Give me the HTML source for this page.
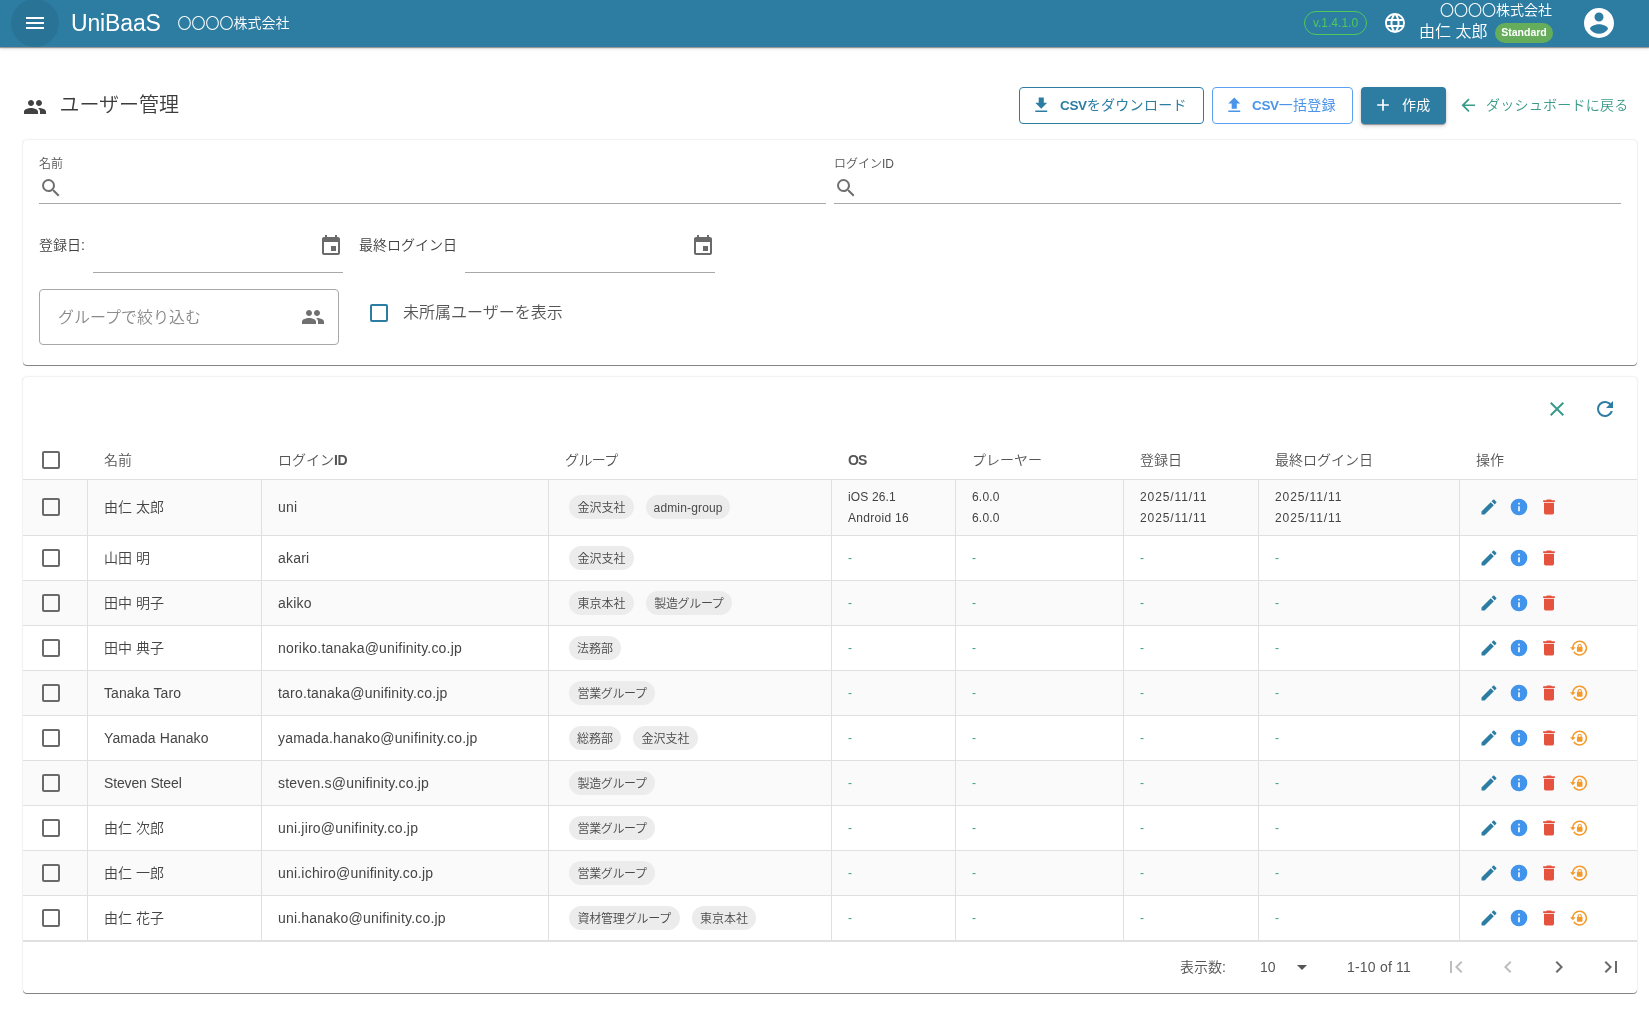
<!DOCTYPE html><html lang="ja"><head><meta charset="utf-8"><title>UniBaaS</title><style>
*{box-sizing:border-box;margin:0;padding:0}
html,body{width:1649px;height:1010px;overflow:hidden;background:#fff}
#app{position:absolute;left:0;top:0;width:1649px;height:1010px;will-change:transform;transform:translateZ(0)}
body{font-family:"Liberation Sans","Noto Sans CJK JP",sans-serif;color:#424242;position:relative;font-weight:350}
.abs{position:absolute;white-space:nowrap}
.ic{position:absolute;display:block}
#bar{position:absolute;left:0;top:0;width:1649px;height:47px;background:#2d7da3;box-shadow:0 1px 1px 0 rgba(0,0,0,.35),0 2px 3px 0 rgba(0,0,0,.12)}
.card{position:absolute;background:#fff;border-radius:4px;box-shadow:0 1px .5px 0 rgba(0,0,0,.45),0 0 2px 0 rgba(0,0,0,.2)}
.btn{position:absolute;height:37px;border-radius:4px;font-size:13px;white-space:nowrap}
.btn b{font-weight:700;font-size:13.5px;letter-spacing:-.35px}
.btn .jp{font-size:14px;font-weight:400;letter-spacing:.3px}
.line{position:absolute;height:1px;background:#a8a8a8}
.vl{position:absolute;width:1px;background:#e0e0e0}
.hl{position:absolute;height:1px;background:#e0e0e0;left:23px;width:1614px}
.row{position:absolute;left:23px;width:1614px}
.chip{position:absolute;height:24px;border-radius:12px;background:#ececec;font-size:12px;line-height:24px;padding:0;text-align:center;color:#4a4a4a;white-space:nowrap}
.chip i{font-style:normal;display:inline-block;transform:translateY(.5px)}
.t14{font-size:14px;color:#454545;letter-spacing:.2px}
.dash{font-size:12px;color:#3f9a90}
.sm{font-size:12px;color:#424242;letter-spacing:.3px}
.hd{font-size:14px;color:#555;}
</style></head><body><div id="app">
<div id="bar">
<div class="abs" style="left:11px;top:-1px;width:48px;height:48px;border-radius:50%;background:rgba(0,0,0,.075)"></div>
<svg class="ic" style="left:23px;top:11px;width:24px;height:24px;" viewBox="0 0 24 24"><path fill="#fff" d="M3,6H21V8H3V6M3,11H21V13H3V11M3,16H21V18H3V16Z"/></svg>
<div class="abs" id="brand" style="left:71px;top:9px;font-size:23px;line-height:28px;color:#fff;letter-spacing:-.15px">UniBaaS</div>
<div class="abs" id="co1" style="left:177.5px;top:12.5px;font-size:14px;line-height:20px;color:#fff">〇〇〇〇株式会社</div>
<div class="abs" id="ver" style="left:1304px;top:11px;width:63px;height:24px;border:1px solid #4dc95a;border-radius:12px;color:#4dc95a;font-size:12px;line-height:22px;text-align:center">v.1.4.1.0</div>
<svg class="ic" style="left:1383px;top:11px;width:24px;height:24px;" viewBox="0 0 24 24"><path fill="#fff" d="M16.36,14C16.44,13.34 16.5,12.68 16.5,12C16.5,11.32 16.44,10.66 16.36,10H19.74C19.9,10.64 20,11.31 20,12C20,12.69 19.9,13.36 19.74,14M14.59,19.56C15.19,18.45 15.65,17.25 15.97,16H18.92C17.96,17.65 16.43,18.93 14.59,19.56M14.34,14H9.66C9.56,13.34 9.5,12.68 9.5,12C9.5,11.32 9.56,10.65 9.66,10H14.34C14.43,10.65 14.5,11.32 14.5,12C14.5,12.68 14.43,13.34 14.34,14M12,19.96C11.17,18.76 10.5,17.43 10.09,16H13.91C13.5,17.43 12.83,18.76 12,19.96M8,8H5.08C6.03,6.34 7.57,5.06 9.4,4.44C8.8,5.55 8.35,6.75 8,8M5.08,16H8C8.35,17.25 8.8,18.45 9.4,19.56C7.57,18.93 6.03,17.65 5.08,16M4.26,14C4.1,13.36 4,12.69 4,12C4,11.31 4.1,10.64 4.26,10H7.64C7.56,10.66 7.5,11.32 7.5,12C7.5,12.68 7.56,13.34 7.64,14M12,4.03C12.83,5.23 13.5,6.57 13.91,8H10.09C10.5,6.57 11.17,5.23 12,4.03M18.92,8H15.97C15.65,6.75 15.19,5.55 14.59,4.44C16.43,5.07 17.96,6.34 18.92,8M12,2C6.47,2 2,6.5 2,12A10,10 0 0,0 12,22A10,10 0 0,0 22,12A10,10 0 0,0 12,2Z"/></svg>
<div class="abs" id="co2" style="right:97px;top:0px;font-size:14px;line-height:21px;color:#fff">〇〇〇〇株式会社</div>
<div class="abs" id="uname" style="left:1419px;top:21px;font-size:16px;line-height:22px;color:#fff">由仁 太郎</div>
<div class="abs" id="std" style="left:1495px;top:23px;width:58px;height:20px;border-radius:10px;background:#66ad5b;color:#fff;font-size:10.5px;font-weight:700;line-height:19px;text-align:center">Standard</div>
<svg class="ic" style="left:1581px;top:5px;width:36px;height:36px;" viewBox="0 0 24 24"><path fill="#fff" d="M12,19.2C9.5,19.2 7.29,17.92 6,16C6.03,14 10,12.9 12,12.9C14,12.9 17.97,14 18,16C16.71,17.92 14.5,19.2 12,19.2M12,5A3,3 0 0,1 15,8A3,3 0 0,1 12,11A3,3 0 0,1 9,8A3,3 0 0,1 12,5M12,2A10,10 0 0,0 2,12A10,10 0 0,0 12,22A10,10 0 0,0 22,12C22,6.47 17.5,2 12,2Z"/></svg>
</div>
<svg class="ic" style="left:23px;top:95px;width:24px;height:24px;" viewBox="0 0 24 24"><path fill="#424242" d="M16 11c1.66 0 2.99-1.34 2.99-3S17.66 5 16 5c-1.66 0-3 1.34-3 3s1.34 3 3 3zm-8 0c1.66 0 2.99-1.34 2.99-3S9.66 5 8 5C6.34 5 5 6.34 5 8s1.34 3 3 3zm0 2c-2.33 0-7 1.17-7 3.5V19h14v-2.5c0-2.33-4.67-3.5-7-3.5zm8 0c-.29 0-.62.02-.97.05 1.16.84 1.97 1.97 1.97 3.45V19h6v-2.5c0-2.33-4.67-3.5-7-3.5z"/></svg>
<div class="abs" id="title" style="left:59.5px;top:90px;font-size:20px;line-height:30px;color:#3c3c3c;font-weight:350">ユーザー管理</div>
<div class="btn" style="left:1019px;top:87px;width:185px;border:1px solid #2d7da3;color:#2d7da3"><svg class="ic" style="left:10.75px;top:6.75px;width:20.5px;height:20.5px;" viewBox="0 0 24 24"><path fill="#2d7da3" d="M5,20H19V18H5M19,9H15V3H9V9H5L12,16L19,9Z"/></svg><span class="abs" id="b1" style="left:40px;top:0;line-height:35px"><b>CSV</b><span class="jp">をダウンロード</span></span></div>
<div class="btn" style="left:1212px;top:87px;width:141px;border:1px solid #5aa1f2;color:#4a94ea"><svg class="ic" style="left:10.75px;top:6.75px;width:20.5px;height:20.5px;" viewBox="0 0 24 24"><path fill="#4a94ea" d="M9,16V10H5L12,3L19,10H15V16H9M5,20V18H19V20H5Z"/></svg><span class="abs" id="b2" style="left:39px;top:0;line-height:35px"><b>CSV</b><span class="jp">一括登録</span></span></div>
<div class="btn" style="left:1361px;top:87px;width:85px;background:#2d7da3;color:#fff;box-shadow:0 1px 1px 0 rgba(0,0,0,.35),0 2px 4px 0 rgba(0,0,0,.18)"><svg class="ic" style="left:12px;top:8px;width:20px;height:20px;" viewBox="0 0 24 24"><path fill="#fff" d="M19,13H13V19H11V13H5V11H11V5H13V11H19V13Z"/></svg><span class="abs jp" id="b3" style="left:41px;top:0;line-height:37px">作成</span></div>
<svg class="ic" style="left:1458.05px;top:94.75px;width:20.5px;height:20.5px;" viewBox="0 0 24 24"><path fill="#3a9a8a" d="M20,11V13H8L13.5,18.5L12.08,19.92L4.16,12L12.08,4.08L13.5,5.5L8,11H20Z"/></svg>
<div class="abs" id="back" style="left:1486px;top:94px;font-size:14px;line-height:22px;color:#3a9a8a;letter-spacing:.25px">ダッシュボードに戻る</div>
<div class="card" style="left:23px;top:140px;width:1614px;height:225px"></div>
<div class="abs" style="left:39px;top:156px;font-size:12px;line-height:16px;color:#555">名前</div>
<svg class="ic" style="left:39px;top:176px;width:24px;height:24px;" viewBox="0 0 24 24"><path fill="#707070" d="M9.5,3A6.5,6.5 0 0,1 16,9.5C16,11.11 15.41,12.59 14.44,13.73L14.71,14H15.5L20.5,19L19,20.5L14,15.5V14.71L13.73,14.44C12.59,15.41 11.11,16 9.5,16A6.5,6.5 0 0,1 3,9.5A6.5,6.5 0 0,1 9.5,3M9.5,5C7,5 5,7 5,9.5C5,12 7,14 9.5,14C12,14 14,12 14,9.5C14,7 12,5 9.5,5Z"/></svg>
<div class="line" style="left:39px;top:203px;width:787px"></div>
<div class="abs" style="left:834px;top:156px;font-size:12px;line-height:16px;color:#555">ログインID</div>
<svg class="ic" style="left:834px;top:176px;width:24px;height:24px;" viewBox="0 0 24 24"><path fill="#707070" d="M9.5,3A6.5,6.5 0 0,1 16,9.5C16,11.11 15.41,12.59 14.44,13.73L14.71,14H15.5L20.5,19L19,20.5L14,15.5V14.71L13.73,14.44C12.59,15.41 11.11,16 9.5,16A6.5,6.5 0 0,1 3,9.5A6.5,6.5 0 0,1 9.5,3M9.5,5C7,5 5,7 5,9.5C5,12 7,14 9.5,14C12,14 14,12 14,9.5C14,7 12,5 9.5,5Z"/></svg>
<div class="line" style="left:834px;top:203px;width:787px"></div>
<div class="abs" style="left:39px;top:235px;font-size:14px;line-height:20px;color:#424242">登録日:</div>
<div class="line" style="left:93px;top:272px;width:250px"></div>
<svg class="ic" style="left:319px;top:234px;width:24px;height:24px;" viewBox="0 0 24 24"><path fill="#6a6a6a" d="M17 12h-5v5h5v-5zM16 1v2H8V1H6v2H5c-1.11 0-1.99.9-1.99 2L3 19c0 1.1.89 2 2 2h14c1.1 0 2-.9 2-2V5c0-1.1-.9-2-2-2h-1V1h-2zm3 18H5V8h14v11z"/></svg>
<div class="abs" style="left:359px;top:235px;font-size:14px;line-height:20px;color:#424242">最終ログイン日</div>
<div class="line" style="left:465px;top:272px;width:250px"></div>
<svg class="ic" style="left:691px;top:234px;width:24px;height:24px;" viewBox="0 0 24 24"><path fill="#6a6a6a" d="M17 12h-5v5h5v-5zM16 1v2H8V1H6v2H5c-1.11 0-1.99.9-1.99 2L3 19c0 1.1.89 2 2 2h14c1.1 0 2-.9 2-2V5c0-1.1-.9-2-2-2h-1V1h-2zm3 18H5V8h14v11z"/></svg>
<div class="abs" style="left:39px;top:289px;width:300px;height:56px;border:1px solid #a8a8a8;border-radius:4px"></div>
<div class="abs" style="left:58px;top:306px;font-size:16px;line-height:24px;color:#8a8a8a">グループで絞り込む</div>
<svg class="ic" style="left:301px;top:305px;width:24px;height:24px;" viewBox="0 0 24 24"><path fill="#707070" d="M16 11c1.66 0 2.99-1.34 2.99-3S17.66 5 16 5c-1.66 0-3 1.34-3 3s1.34 3 3 3zm-8 0c1.66 0 2.99-1.34 2.99-3S9.66 5 8 5C6.34 5 5 6.34 5 8s1.34 3 3 3zm0 2c-2.33 0-7 1.17-7 3.5V19h14v-2.5c0-2.33-4.67-3.5-7-3.5zm8 0c-.29 0-.62.02-.97.05 1.16.84 1.97 1.97 1.97 3.45V19h6v-2.5c0-2.33-4.67-3.5-7-3.5z"/></svg>
<div class="abs" style="left:370px;top:304px;width:18px;height:18px;border:2px solid #2d7da3;border-radius:2px"></div>
<div class="abs" style="left:403px;top:301px;font-size:16px;line-height:24px;color:#555">未所属ユーザーを表示</div>
<div class="card" style="left:23px;top:377px;width:1614px;height:616px"></div>
<svg class="ic" style="left:1545px;top:397px;width:24px;height:24px;" viewBox="0 0 24 24"><path fill="#3a9a8a" d="M19,6.41L17.59,5L12,10.59L6.41,5L5,6.41L10.59,12L5,17.59L6.41,19L12,13.41L17.59,19L19,17.59L13.41,12L19,6.41Z"/></svg>
<svg class="ic" style="left:1593px;top:397px;width:24px;height:24px;" viewBox="0 0 24 24"><path fill="#2d7da3" d="M17.65,6.35C16.2,4.9 14.21,4 12,4A8,8 0 0,0 4,12A8,8 0 0,0 12,20C15.73,20 18.84,17.45 19.73,14H17.65C16.83,16.33 14.61,18 12,18A6,6 0 0,1 6,12A6,6 0 0,1 12,6C13.66,6 15.14,6.69 16.22,7.78L13,11H20V4L17.65,6.35Z"/></svg>
<svg class="ic" style="left:39px;top:448px;width:24px;height:24px;" viewBox="0 0 24 24"><path fill="#6a6a6a" d="M19,3H5C3.89,3 3,3.89 3,5V19A2,2 0 0,0 5,21H19A2,2 0 0,0 21,19V5C21,3.89 20.1,3 19,3M19,5V19H5V5H19Z"/></svg>
<div class="abs hd" style="left:104px;top:449.5px;line-height:20px;">名前</div>
<div class="abs hd" style="left:278px;top:449.5px;line-height:20px;">ログイン<b style="letter-spacing:-.5px">ID</b></div>
<div class="abs hd" style="left:565px;top:449.5px;line-height:20px;letter-spacing:-.6px;">グループ</div>
<div class="abs hd" style="left:848px;top:449.5px;line-height:20px;font-weight:700;letter-spacing:-.9px;">OS</div>
<div class="abs hd" style="left:972px;top:449.5px;line-height:20px;">プレーヤー</div>
<div class="abs hd" style="left:1140px;top:449.5px;line-height:20px;">登録日</div>
<div class="abs hd" style="left:1275px;top:449.5px;line-height:20px;">最終ログイン日</div>
<div class="abs hd" style="left:1476px;top:449.5px;line-height:20px;">操作</div>
<div class="row" style="top:480px;height:55px;background:#fafafa"></div>
<div class="hl" style="top:479px"></div>
<svg class="ic" style="left:39px;top:494.5px;width:24px;height:24px;" viewBox="0 0 24 24"><path fill="#6a6a6a" d="M19,3H5C3.89,3 3,3.89 3,5V19A2,2 0 0,0 5,21H19A2,2 0 0,0 21,19V5C21,3.89 20.1,3 19,3M19,5V19H5V5H19Z"/></svg>
<div class="abs t14" style="left:104px;top:496.5px;line-height:20px;letter-spacing:0">由仁 太郎</div>
<div class="abs t14" style="left:278px;top:496.5px;line-height:20px">uni</div>
<div class="abs" style="left:569px;top:494.5px;display:flex;gap:12px"><span class="chip" style="position:static;width:64.8px;letter-spacing:0px"><i>金沢支社</i></span><span class="chip" style="position:static;width:84.6px;letter-spacing:0.15px"><i>admin-group</i></span></div>
<div class="abs sm" style="left:848px;top:487px;line-height:20px;letter-spacing:0.15px">iOS 26.1</div>
<div class="abs sm" style="left:848px;top:508px;line-height:20px;letter-spacing:0.3px">Android 16</div>
<div class="abs sm" style="left:972px;top:487px;line-height:20px;letter-spacing:0.2px">6.0.0</div>
<div class="abs sm" style="left:972px;top:508px;line-height:20px;letter-spacing:0.2px">6.0.0</div>
<div class="abs sm" style="left:1140px;top:487px;line-height:20px;letter-spacing:0.9px">2025/11/11</div>
<div class="abs sm" style="left:1140px;top:508px;line-height:20px;letter-spacing:0.9px">2025/11/11</div>
<div class="abs sm" style="left:1275px;top:487px;line-height:20px;letter-spacing:0.9px">2025/11/11</div>
<div class="abs sm" style="left:1275px;top:508px;line-height:20px;letter-spacing:0.9px">2025/11/11</div>
<svg class="ic" style="left:1479px;top:496.5px;width:20px;height:20px;" viewBox="0 0 24 24"><path fill="#2d7da3" d="M20.71,7.04C21.1,6.65 21.1,6 20.71,5.63L18.37,3.29C18,2.9 17.35,2.9 16.96,3.29L15.12,5.12L18.87,8.87M3,17.25V21H6.75L17.81,9.93L14.06,6.18L3,17.25Z"/></svg>
<svg class="ic" style="left:1509px;top:496.5px;width:20px;height:20px;" viewBox="0 0 24 24"><path fill="#4094ec" d="M13,9H11V7H13M13,17H11V11H13M12,2A10,10 0 0,0 2,12A10,10 0 0,0 12,22A10,10 0 0,0 22,12A10,10 0 0,0 12,2Z"/></svg>
<svg class="ic" style="left:1539px;top:496.5px;width:20px;height:20px;" viewBox="0 0 24 24"><path fill="#e5533e" d="M19,4H15.5L14.5,3H9.5L8.5,4H5V6H19M6,19A2,2 0 0,0 8,21H16A2,2 0 0,0 18,19V7H6V19Z"/></svg>
<div class="row" style="top:536px;height:44px;background:#fff"></div>
<div class="hl" style="top:535px"></div>
<svg class="ic" style="left:39px;top:546px;width:24px;height:24px;" viewBox="0 0 24 24"><path fill="#6a6a6a" d="M19,3H5C3.89,3 3,3.89 3,5V19A2,2 0 0,0 5,21H19A2,2 0 0,0 21,19V5C21,3.89 20.1,3 19,3M19,5V19H5V5H19Z"/></svg>
<div class="abs t14" style="left:104px;top:548.0px;line-height:20px;letter-spacing:0">山田 明</div>
<div class="abs t14" style="left:278px;top:548.0px;line-height:20px">akari</div>
<div class="abs" style="left:569px;top:546.0px;display:flex;gap:12px"><span class="chip" style="position:static;width:64.8px;letter-spacing:0px"><i>金沢支社</i></span></div>
<div class="abs dash" style="left:848px;top:548.0px;line-height:20px">-</div>
<div class="abs dash" style="left:972px;top:548.0px;line-height:20px">-</div>
<div class="abs dash" style="left:1140px;top:548.0px;line-height:20px">-</div>
<div class="abs dash" style="left:1275px;top:548.0px;line-height:20px">-</div>
<svg class="ic" style="left:1479px;top:548px;width:20px;height:20px;" viewBox="0 0 24 24"><path fill="#2d7da3" d="M20.71,7.04C21.1,6.65 21.1,6 20.71,5.63L18.37,3.29C18,2.9 17.35,2.9 16.96,3.29L15.12,5.12L18.87,8.87M3,17.25V21H6.75L17.81,9.93L14.06,6.18L3,17.25Z"/></svg>
<svg class="ic" style="left:1509px;top:548px;width:20px;height:20px;" viewBox="0 0 24 24"><path fill="#4094ec" d="M13,9H11V7H13M13,17H11V11H13M12,2A10,10 0 0,0 2,12A10,10 0 0,0 12,22A10,10 0 0,0 22,12A10,10 0 0,0 12,2Z"/></svg>
<svg class="ic" style="left:1539px;top:548px;width:20px;height:20px;" viewBox="0 0 24 24"><path fill="#e5533e" d="M19,4H15.5L14.5,3H9.5L8.5,4H5V6H19M6,19A2,2 0 0,0 8,21H16A2,2 0 0,0 18,19V7H6V19Z"/></svg>
<div class="row" style="top:581px;height:44px;background:#fafafa"></div>
<div class="hl" style="top:580px"></div>
<svg class="ic" style="left:39px;top:591px;width:24px;height:24px;" viewBox="0 0 24 24"><path fill="#6a6a6a" d="M19,3H5C3.89,3 3,3.89 3,5V19A2,2 0 0,0 5,21H19A2,2 0 0,0 21,19V5C21,3.89 20.1,3 19,3M19,5V19H5V5H19Z"/></svg>
<div class="abs t14" style="left:104px;top:593.0px;line-height:20px;letter-spacing:0">田中 明子</div>
<div class="abs t14" style="left:278px;top:593.0px;line-height:20px">akiko</div>
<div class="abs" style="left:569px;top:591.0px;display:flex;gap:12px"><span class="chip" style="position:static;width:64.8px;letter-spacing:0px"><i>東京本社</i></span><span class="chip" style="position:static;width:86.2px;letter-spacing:-0.37px"><i>製造グループ</i></span></div>
<div class="abs dash" style="left:848px;top:593.0px;line-height:20px">-</div>
<div class="abs dash" style="left:972px;top:593.0px;line-height:20px">-</div>
<div class="abs dash" style="left:1140px;top:593.0px;line-height:20px">-</div>
<div class="abs dash" style="left:1275px;top:593.0px;line-height:20px">-</div>
<svg class="ic" style="left:1479px;top:593px;width:20px;height:20px;" viewBox="0 0 24 24"><path fill="#2d7da3" d="M20.71,7.04C21.1,6.65 21.1,6 20.71,5.63L18.37,3.29C18,2.9 17.35,2.9 16.96,3.29L15.12,5.12L18.87,8.87M3,17.25V21H6.75L17.81,9.93L14.06,6.18L3,17.25Z"/></svg>
<svg class="ic" style="left:1509px;top:593px;width:20px;height:20px;" viewBox="0 0 24 24"><path fill="#4094ec" d="M13,9H11V7H13M13,17H11V11H13M12,2A10,10 0 0,0 2,12A10,10 0 0,0 12,22A10,10 0 0,0 22,12A10,10 0 0,0 12,2Z"/></svg>
<svg class="ic" style="left:1539px;top:593px;width:20px;height:20px;" viewBox="0 0 24 24"><path fill="#e5533e" d="M19,4H15.5L14.5,3H9.5L8.5,4H5V6H19M6,19A2,2 0 0,0 8,21H16A2,2 0 0,0 18,19V7H6V19Z"/></svg>
<div class="row" style="top:626px;height:44px;background:#fff"></div>
<div class="hl" style="top:625px"></div>
<svg class="ic" style="left:39px;top:636px;width:24px;height:24px;" viewBox="0 0 24 24"><path fill="#6a6a6a" d="M19,3H5C3.89,3 3,3.89 3,5V19A2,2 0 0,0 5,21H19A2,2 0 0,0 21,19V5C21,3.89 20.1,3 19,3M19,5V19H5V5H19Z"/></svg>
<div class="abs t14" style="left:104px;top:638.0px;line-height:20px;letter-spacing:0">田中 典子</div>
<div class="abs t14" style="left:278px;top:638.0px;line-height:20px">noriko.tanaka@unifinity.co.jp</div>
<div class="abs" style="left:569px;top:636.0px;display:flex;gap:12px"><span class="chip" style="position:static;width:52px;letter-spacing:0px"><i>法務部</i></span></div>
<div class="abs dash" style="left:848px;top:638.0px;line-height:20px">-</div>
<div class="abs dash" style="left:972px;top:638.0px;line-height:20px">-</div>
<div class="abs dash" style="left:1140px;top:638.0px;line-height:20px">-</div>
<div class="abs dash" style="left:1275px;top:638.0px;line-height:20px">-</div>
<svg class="ic" style="left:1479px;top:638px;width:20px;height:20px;" viewBox="0 0 24 24"><path fill="#2d7da3" d="M20.71,7.04C21.1,6.65 21.1,6 20.71,5.63L18.37,3.29C18,2.9 17.35,2.9 16.96,3.29L15.12,5.12L18.87,8.87M3,17.25V21H6.75L17.81,9.93L14.06,6.18L3,17.25Z"/></svg>
<svg class="ic" style="left:1509px;top:638px;width:20px;height:20px;" viewBox="0 0 24 24"><path fill="#4094ec" d="M13,9H11V7H13M13,17H11V11H13M12,2A10,10 0 0,0 2,12A10,10 0 0,0 12,22A10,10 0 0,0 22,12A10,10 0 0,0 12,2Z"/></svg>
<svg class="ic" style="left:1539px;top:638px;width:20px;height:20px;" viewBox="0 0 24 24"><path fill="#e5533e" d="M19,4H15.5L14.5,3H9.5L8.5,4H5V6H19M6,19A2,2 0 0,0 8,21H16A2,2 0 0,0 18,19V7H6V19Z"/></svg>
<svg class="ic" style="left:1569.9px;top:638.9px;width:18.2px;height:18.2px;" viewBox="0 0 24 24"><path fill="#f39a2b" d="M12.63,2C18.16,2 22.64,6.5 22.64,12C22.64,17.5 18.16,22 12.63,22C9.12,22 6.05,20.18 4.26,17.43L5.84,16.18C7.25,18.47 9.76,20 12.64,20A8,8 0 0,0 20.64,12A8,8 0 0,0 12.64,4C8.56,4 5.2,7.06 4.71,11H7.47L3.73,14.73L0,11H2.69C3.19,5.95 7.45,2 12.63,2M15.59,10.24C16.09,10.25 16.5,10.65 16.5,11.16V15.77C16.5,16.27 16.09,16.69 15.58,16.69H10.05C9.54,16.69 9.13,16.27 9.13,15.77V11.16C9.13,10.65 9.54,10.25 10.04,10.24V9.23C10.04,7.7 11.29,6.46 12.81,6.46C14.34,6.46 15.59,7.7 15.59,9.23V10.24M12.81,7.86C12.06,7.86 11.44,8.47 11.44,9.23V10.24H14.19V9.23C14.19,8.47 13.57,7.86 12.81,7.86Z"/></svg>
<div class="row" style="top:671px;height:44px;background:#fafafa"></div>
<div class="hl" style="top:670px"></div>
<svg class="ic" style="left:39px;top:681px;width:24px;height:24px;" viewBox="0 0 24 24"><path fill="#6a6a6a" d="M19,3H5C3.89,3 3,3.89 3,5V19A2,2 0 0,0 5,21H19A2,2 0 0,0 21,19V5C21,3.89 20.1,3 19,3M19,5V19H5V5H19Z"/></svg>
<div class="abs t14" style="left:104px;top:683.0px;line-height:20px;letter-spacing:.1px">Tanaka Taro</div>
<div class="abs t14" style="left:278px;top:683.0px;line-height:20px">taro.tanaka@unifinity.co.jp</div>
<div class="abs" style="left:569px;top:681.0px;display:flex;gap:12px"><span class="chip" style="position:static;width:86.2px;letter-spacing:-0.37px"><i>営業グループ</i></span></div>
<div class="abs dash" style="left:848px;top:683.0px;line-height:20px">-</div>
<div class="abs dash" style="left:972px;top:683.0px;line-height:20px">-</div>
<div class="abs dash" style="left:1140px;top:683.0px;line-height:20px">-</div>
<div class="abs dash" style="left:1275px;top:683.0px;line-height:20px">-</div>
<svg class="ic" style="left:1479px;top:683px;width:20px;height:20px;" viewBox="0 0 24 24"><path fill="#2d7da3" d="M20.71,7.04C21.1,6.65 21.1,6 20.71,5.63L18.37,3.29C18,2.9 17.35,2.9 16.96,3.29L15.12,5.12L18.87,8.87M3,17.25V21H6.75L17.81,9.93L14.06,6.18L3,17.25Z"/></svg>
<svg class="ic" style="left:1509px;top:683px;width:20px;height:20px;" viewBox="0 0 24 24"><path fill="#4094ec" d="M13,9H11V7H13M13,17H11V11H13M12,2A10,10 0 0,0 2,12A10,10 0 0,0 12,22A10,10 0 0,0 22,12A10,10 0 0,0 12,2Z"/></svg>
<svg class="ic" style="left:1539px;top:683px;width:20px;height:20px;" viewBox="0 0 24 24"><path fill="#e5533e" d="M19,4H15.5L14.5,3H9.5L8.5,4H5V6H19M6,19A2,2 0 0,0 8,21H16A2,2 0 0,0 18,19V7H6V19Z"/></svg>
<svg class="ic" style="left:1569.9px;top:683.9px;width:18.2px;height:18.2px;" viewBox="0 0 24 24"><path fill="#f39a2b" d="M12.63,2C18.16,2 22.64,6.5 22.64,12C22.64,17.5 18.16,22 12.63,22C9.12,22 6.05,20.18 4.26,17.43L5.84,16.18C7.25,18.47 9.76,20 12.64,20A8,8 0 0,0 20.64,12A8,8 0 0,0 12.64,4C8.56,4 5.2,7.06 4.71,11H7.47L3.73,14.73L0,11H2.69C3.19,5.95 7.45,2 12.63,2M15.59,10.24C16.09,10.25 16.5,10.65 16.5,11.16V15.77C16.5,16.27 16.09,16.69 15.58,16.69H10.05C9.54,16.69 9.13,16.27 9.13,15.77V11.16C9.13,10.65 9.54,10.25 10.04,10.24V9.23C10.04,7.7 11.29,6.46 12.81,6.46C14.34,6.46 15.59,7.7 15.59,9.23V10.24M12.81,7.86C12.06,7.86 11.44,8.47 11.44,9.23V10.24H14.19V9.23C14.19,8.47 13.57,7.86 12.81,7.86Z"/></svg>
<div class="row" style="top:716px;height:44px;background:#fff"></div>
<div class="hl" style="top:715px"></div>
<svg class="ic" style="left:39px;top:726px;width:24px;height:24px;" viewBox="0 0 24 24"><path fill="#6a6a6a" d="M19,3H5C3.89,3 3,3.89 3,5V19A2,2 0 0,0 5,21H19A2,2 0 0,0 21,19V5C21,3.89 20.1,3 19,3M19,5V19H5V5H19Z"/></svg>
<div class="abs t14" style="left:104px;top:728.0px;line-height:20px;letter-spacing:.1px">Yamada Hanako</div>
<div class="abs t14" style="left:278px;top:728.0px;line-height:20px">yamada.hanako@unifinity.co.jp</div>
<div class="abs" style="left:569px;top:726.0px;display:flex;gap:12px"><span class="chip" style="position:static;width:52px;letter-spacing:0px"><i>総務部</i></span><span class="chip" style="position:static;width:64.8px;letter-spacing:0px"><i>金沢支社</i></span></div>
<div class="abs dash" style="left:848px;top:728.0px;line-height:20px">-</div>
<div class="abs dash" style="left:972px;top:728.0px;line-height:20px">-</div>
<div class="abs dash" style="left:1140px;top:728.0px;line-height:20px">-</div>
<div class="abs dash" style="left:1275px;top:728.0px;line-height:20px">-</div>
<svg class="ic" style="left:1479px;top:728px;width:20px;height:20px;" viewBox="0 0 24 24"><path fill="#2d7da3" d="M20.71,7.04C21.1,6.65 21.1,6 20.71,5.63L18.37,3.29C18,2.9 17.35,2.9 16.96,3.29L15.12,5.12L18.87,8.87M3,17.25V21H6.75L17.81,9.93L14.06,6.18L3,17.25Z"/></svg>
<svg class="ic" style="left:1509px;top:728px;width:20px;height:20px;" viewBox="0 0 24 24"><path fill="#4094ec" d="M13,9H11V7H13M13,17H11V11H13M12,2A10,10 0 0,0 2,12A10,10 0 0,0 12,22A10,10 0 0,0 22,12A10,10 0 0,0 12,2Z"/></svg>
<svg class="ic" style="left:1539px;top:728px;width:20px;height:20px;" viewBox="0 0 24 24"><path fill="#e5533e" d="M19,4H15.5L14.5,3H9.5L8.5,4H5V6H19M6,19A2,2 0 0,0 8,21H16A2,2 0 0,0 18,19V7H6V19Z"/></svg>
<svg class="ic" style="left:1569.9px;top:728.9px;width:18.2px;height:18.2px;" viewBox="0 0 24 24"><path fill="#f39a2b" d="M12.63,2C18.16,2 22.64,6.5 22.64,12C22.64,17.5 18.16,22 12.63,22C9.12,22 6.05,20.18 4.26,17.43L5.84,16.18C7.25,18.47 9.76,20 12.64,20A8,8 0 0,0 20.64,12A8,8 0 0,0 12.64,4C8.56,4 5.2,7.06 4.71,11H7.47L3.73,14.73L0,11H2.69C3.19,5.95 7.45,2 12.63,2M15.59,10.24C16.09,10.25 16.5,10.65 16.5,11.16V15.77C16.5,16.27 16.09,16.69 15.58,16.69H10.05C9.54,16.69 9.13,16.27 9.13,15.77V11.16C9.13,10.65 9.54,10.25 10.04,10.24V9.23C10.04,7.7 11.29,6.46 12.81,6.46C14.34,6.46 15.59,7.7 15.59,9.23V10.24M12.81,7.86C12.06,7.86 11.44,8.47 11.44,9.23V10.24H14.19V9.23C14.19,8.47 13.57,7.86 12.81,7.86Z"/></svg>
<div class="row" style="top:761px;height:44px;background:#fafafa"></div>
<div class="hl" style="top:760px"></div>
<svg class="ic" style="left:39px;top:771px;width:24px;height:24px;" viewBox="0 0 24 24"><path fill="#6a6a6a" d="M19,3H5C3.89,3 3,3.89 3,5V19A2,2 0 0,0 5,21H19A2,2 0 0,0 21,19V5C21,3.89 20.1,3 19,3M19,5V19H5V5H19Z"/></svg>
<div class="abs t14" style="left:104px;top:773.0px;line-height:20px;letter-spacing:-.15px">Steven Steel</div>
<div class="abs t14" style="left:278px;top:773.0px;line-height:20px">steven.s@unifinity.co.jp</div>
<div class="abs" style="left:569px;top:771.0px;display:flex;gap:12px"><span class="chip" style="position:static;width:86.2px;letter-spacing:-0.37px"><i>製造グループ</i></span></div>
<div class="abs dash" style="left:848px;top:773.0px;line-height:20px">-</div>
<div class="abs dash" style="left:972px;top:773.0px;line-height:20px">-</div>
<div class="abs dash" style="left:1140px;top:773.0px;line-height:20px">-</div>
<div class="abs dash" style="left:1275px;top:773.0px;line-height:20px">-</div>
<svg class="ic" style="left:1479px;top:773px;width:20px;height:20px;" viewBox="0 0 24 24"><path fill="#2d7da3" d="M20.71,7.04C21.1,6.65 21.1,6 20.71,5.63L18.37,3.29C18,2.9 17.35,2.9 16.96,3.29L15.12,5.12L18.87,8.87M3,17.25V21H6.75L17.81,9.93L14.06,6.18L3,17.25Z"/></svg>
<svg class="ic" style="left:1509px;top:773px;width:20px;height:20px;" viewBox="0 0 24 24"><path fill="#4094ec" d="M13,9H11V7H13M13,17H11V11H13M12,2A10,10 0 0,0 2,12A10,10 0 0,0 12,22A10,10 0 0,0 22,12A10,10 0 0,0 12,2Z"/></svg>
<svg class="ic" style="left:1539px;top:773px;width:20px;height:20px;" viewBox="0 0 24 24"><path fill="#e5533e" d="M19,4H15.5L14.5,3H9.5L8.5,4H5V6H19M6,19A2,2 0 0,0 8,21H16A2,2 0 0,0 18,19V7H6V19Z"/></svg>
<svg class="ic" style="left:1569.9px;top:773.9px;width:18.2px;height:18.2px;" viewBox="0 0 24 24"><path fill="#f39a2b" d="M12.63,2C18.16,2 22.64,6.5 22.64,12C22.64,17.5 18.16,22 12.63,22C9.12,22 6.05,20.18 4.26,17.43L5.84,16.18C7.25,18.47 9.76,20 12.64,20A8,8 0 0,0 20.64,12A8,8 0 0,0 12.64,4C8.56,4 5.2,7.06 4.71,11H7.47L3.73,14.73L0,11H2.69C3.19,5.95 7.45,2 12.63,2M15.59,10.24C16.09,10.25 16.5,10.65 16.5,11.16V15.77C16.5,16.27 16.09,16.69 15.58,16.69H10.05C9.54,16.69 9.13,16.27 9.13,15.77V11.16C9.13,10.65 9.54,10.25 10.04,10.24V9.23C10.04,7.7 11.29,6.46 12.81,6.46C14.34,6.46 15.59,7.7 15.59,9.23V10.24M12.81,7.86C12.06,7.86 11.44,8.47 11.44,9.23V10.24H14.19V9.23C14.19,8.47 13.57,7.86 12.81,7.86Z"/></svg>
<div class="row" style="top:806px;height:44px;background:#fff"></div>
<div class="hl" style="top:805px"></div>
<svg class="ic" style="left:39px;top:816px;width:24px;height:24px;" viewBox="0 0 24 24"><path fill="#6a6a6a" d="M19,3H5C3.89,3 3,3.89 3,5V19A2,2 0 0,0 5,21H19A2,2 0 0,0 21,19V5C21,3.89 20.1,3 19,3M19,5V19H5V5H19Z"/></svg>
<div class="abs t14" style="left:104px;top:818.0px;line-height:20px;letter-spacing:0">由仁 次郎</div>
<div class="abs t14" style="left:278px;top:818.0px;line-height:20px">uni.jiro@unifinity.co.jp</div>
<div class="abs" style="left:569px;top:816.0px;display:flex;gap:12px"><span class="chip" style="position:static;width:86.2px;letter-spacing:-0.37px"><i>営業グループ</i></span></div>
<div class="abs dash" style="left:848px;top:818.0px;line-height:20px">-</div>
<div class="abs dash" style="left:972px;top:818.0px;line-height:20px">-</div>
<div class="abs dash" style="left:1140px;top:818.0px;line-height:20px">-</div>
<div class="abs dash" style="left:1275px;top:818.0px;line-height:20px">-</div>
<svg class="ic" style="left:1479px;top:818px;width:20px;height:20px;" viewBox="0 0 24 24"><path fill="#2d7da3" d="M20.71,7.04C21.1,6.65 21.1,6 20.71,5.63L18.37,3.29C18,2.9 17.35,2.9 16.96,3.29L15.12,5.12L18.87,8.87M3,17.25V21H6.75L17.81,9.93L14.06,6.18L3,17.25Z"/></svg>
<svg class="ic" style="left:1509px;top:818px;width:20px;height:20px;" viewBox="0 0 24 24"><path fill="#4094ec" d="M13,9H11V7H13M13,17H11V11H13M12,2A10,10 0 0,0 2,12A10,10 0 0,0 12,22A10,10 0 0,0 22,12A10,10 0 0,0 12,2Z"/></svg>
<svg class="ic" style="left:1539px;top:818px;width:20px;height:20px;" viewBox="0 0 24 24"><path fill="#e5533e" d="M19,4H15.5L14.5,3H9.5L8.5,4H5V6H19M6,19A2,2 0 0,0 8,21H16A2,2 0 0,0 18,19V7H6V19Z"/></svg>
<svg class="ic" style="left:1569.9px;top:818.9px;width:18.2px;height:18.2px;" viewBox="0 0 24 24"><path fill="#f39a2b" d="M12.63,2C18.16,2 22.64,6.5 22.64,12C22.64,17.5 18.16,22 12.63,22C9.12,22 6.05,20.18 4.26,17.43L5.84,16.18C7.25,18.47 9.76,20 12.64,20A8,8 0 0,0 20.64,12A8,8 0 0,0 12.64,4C8.56,4 5.2,7.06 4.71,11H7.47L3.73,14.73L0,11H2.69C3.19,5.95 7.45,2 12.63,2M15.59,10.24C16.09,10.25 16.5,10.65 16.5,11.16V15.77C16.5,16.27 16.09,16.69 15.58,16.69H10.05C9.54,16.69 9.13,16.27 9.13,15.77V11.16C9.13,10.65 9.54,10.25 10.04,10.24V9.23C10.04,7.7 11.29,6.46 12.81,6.46C14.34,6.46 15.59,7.7 15.59,9.23V10.24M12.81,7.86C12.06,7.86 11.44,8.47 11.44,9.23V10.24H14.19V9.23C14.19,8.47 13.57,7.86 12.81,7.86Z"/></svg>
<div class="row" style="top:851px;height:44px;background:#fafafa"></div>
<div class="hl" style="top:850px"></div>
<svg class="ic" style="left:39px;top:861px;width:24px;height:24px;" viewBox="0 0 24 24"><path fill="#6a6a6a" d="M19,3H5C3.89,3 3,3.89 3,5V19A2,2 0 0,0 5,21H19A2,2 0 0,0 21,19V5C21,3.89 20.1,3 19,3M19,5V19H5V5H19Z"/></svg>
<div class="abs t14" style="left:104px;top:863.0px;line-height:20px;letter-spacing:0">由仁 一郎</div>
<div class="abs t14" style="left:278px;top:863.0px;line-height:20px">uni.ichiro@unifinity.co.jp</div>
<div class="abs" style="left:569px;top:861.0px;display:flex;gap:12px"><span class="chip" style="position:static;width:86.2px;letter-spacing:-0.37px"><i>営業グループ</i></span></div>
<div class="abs dash" style="left:848px;top:863.0px;line-height:20px">-</div>
<div class="abs dash" style="left:972px;top:863.0px;line-height:20px">-</div>
<div class="abs dash" style="left:1140px;top:863.0px;line-height:20px">-</div>
<div class="abs dash" style="left:1275px;top:863.0px;line-height:20px">-</div>
<svg class="ic" style="left:1479px;top:863px;width:20px;height:20px;" viewBox="0 0 24 24"><path fill="#2d7da3" d="M20.71,7.04C21.1,6.65 21.1,6 20.71,5.63L18.37,3.29C18,2.9 17.35,2.9 16.96,3.29L15.12,5.12L18.87,8.87M3,17.25V21H6.75L17.81,9.93L14.06,6.18L3,17.25Z"/></svg>
<svg class="ic" style="left:1509px;top:863px;width:20px;height:20px;" viewBox="0 0 24 24"><path fill="#4094ec" d="M13,9H11V7H13M13,17H11V11H13M12,2A10,10 0 0,0 2,12A10,10 0 0,0 12,22A10,10 0 0,0 22,12A10,10 0 0,0 12,2Z"/></svg>
<svg class="ic" style="left:1539px;top:863px;width:20px;height:20px;" viewBox="0 0 24 24"><path fill="#e5533e" d="M19,4H15.5L14.5,3H9.5L8.5,4H5V6H19M6,19A2,2 0 0,0 8,21H16A2,2 0 0,0 18,19V7H6V19Z"/></svg>
<svg class="ic" style="left:1569.9px;top:863.9px;width:18.2px;height:18.2px;" viewBox="0 0 24 24"><path fill="#f39a2b" d="M12.63,2C18.16,2 22.64,6.5 22.64,12C22.64,17.5 18.16,22 12.63,22C9.12,22 6.05,20.18 4.26,17.43L5.84,16.18C7.25,18.47 9.76,20 12.64,20A8,8 0 0,0 20.64,12A8,8 0 0,0 12.64,4C8.56,4 5.2,7.06 4.71,11H7.47L3.73,14.73L0,11H2.69C3.19,5.95 7.45,2 12.63,2M15.59,10.24C16.09,10.25 16.5,10.65 16.5,11.16V15.77C16.5,16.27 16.09,16.69 15.58,16.69H10.05C9.54,16.69 9.13,16.27 9.13,15.77V11.16C9.13,10.65 9.54,10.25 10.04,10.24V9.23C10.04,7.7 11.29,6.46 12.81,6.46C14.34,6.46 15.59,7.7 15.59,9.23V10.24M12.81,7.86C12.06,7.86 11.44,8.47 11.44,9.23V10.24H14.19V9.23C14.19,8.47 13.57,7.86 12.81,7.86Z"/></svg>
<div class="row" style="top:896px;height:44px;background:#fff"></div>
<div class="hl" style="top:895px"></div>
<svg class="ic" style="left:39px;top:906px;width:24px;height:24px;" viewBox="0 0 24 24"><path fill="#6a6a6a" d="M19,3H5C3.89,3 3,3.89 3,5V19A2,2 0 0,0 5,21H19A2,2 0 0,0 21,19V5C21,3.89 20.1,3 19,3M19,5V19H5V5H19Z"/></svg>
<div class="abs t14" style="left:104px;top:908.0px;line-height:20px;letter-spacing:0">由仁 花子</div>
<div class="abs t14" style="left:278px;top:908.0px;line-height:20px">uni.hanako@unifinity.co.jp</div>
<div class="abs" style="left:569px;top:906.0px;display:flex;gap:12px"><span class="chip" style="position:static;width:110.6px;letter-spacing:-0.22px"><i>資材管理グループ</i></span><span class="chip" style="position:static;width:64.8px;letter-spacing:0px"><i>東京本社</i></span></div>
<div class="abs dash" style="left:848px;top:908.0px;line-height:20px">-</div>
<div class="abs dash" style="left:972px;top:908.0px;line-height:20px">-</div>
<div class="abs dash" style="left:1140px;top:908.0px;line-height:20px">-</div>
<div class="abs dash" style="left:1275px;top:908.0px;line-height:20px">-</div>
<svg class="ic" style="left:1479px;top:908px;width:20px;height:20px;" viewBox="0 0 24 24"><path fill="#2d7da3" d="M20.71,7.04C21.1,6.65 21.1,6 20.71,5.63L18.37,3.29C18,2.9 17.35,2.9 16.96,3.29L15.12,5.12L18.87,8.87M3,17.25V21H6.75L17.81,9.93L14.06,6.18L3,17.25Z"/></svg>
<svg class="ic" style="left:1509px;top:908px;width:20px;height:20px;" viewBox="0 0 24 24"><path fill="#4094ec" d="M13,9H11V7H13M13,17H11V11H13M12,2A10,10 0 0,0 2,12A10,10 0 0,0 12,22A10,10 0 0,0 22,12A10,10 0 0,0 12,2Z"/></svg>
<svg class="ic" style="left:1539px;top:908px;width:20px;height:20px;" viewBox="0 0 24 24"><path fill="#e5533e" d="M19,4H15.5L14.5,3H9.5L8.5,4H5V6H19M6,19A2,2 0 0,0 8,21H16A2,2 0 0,0 18,19V7H6V19Z"/></svg>
<svg class="ic" style="left:1569.9px;top:908.9px;width:18.2px;height:18.2px;" viewBox="0 0 24 24"><path fill="#f39a2b" d="M12.63,2C18.16,2 22.64,6.5 22.64,12C22.64,17.5 18.16,22 12.63,22C9.12,22 6.05,20.18 4.26,17.43L5.84,16.18C7.25,18.47 9.76,20 12.64,20A8,8 0 0,0 20.64,12A8,8 0 0,0 12.64,4C8.56,4 5.2,7.06 4.71,11H7.47L3.73,14.73L0,11H2.69C3.19,5.95 7.45,2 12.63,2M15.59,10.24C16.09,10.25 16.5,10.65 16.5,11.16V15.77C16.5,16.27 16.09,16.69 15.58,16.69H10.05C9.54,16.69 9.13,16.27 9.13,15.77V11.16C9.13,10.65 9.54,10.25 10.04,10.24V9.23C10.04,7.7 11.29,6.46 12.81,6.46C14.34,6.46 15.59,7.7 15.59,9.23V10.24M12.81,7.86C12.06,7.86 11.44,8.47 11.44,9.23V10.24H14.19V9.23C14.19,8.47 13.57,7.86 12.81,7.86Z"/></svg>
<div class="hl" style="top:940px;height:2px"></div>
<div class="vl" style="left:87px;top:480px;height:460px"></div>
<div class="vl" style="left:261px;top:480px;height:460px"></div>
<div class="vl" style="left:548px;top:480px;height:460px"></div>
<div class="vl" style="left:831px;top:480px;height:460px"></div>
<div class="vl" style="left:955px;top:480px;height:460px"></div>
<div class="vl" style="left:1123px;top:480px;height:460px"></div>
<div class="vl" style="left:1258px;top:480px;height:460px"></div>
<div class="vl" style="left:1459px;top:480px;height:460px"></div>
<div class="abs" style="left:1180px;top:957px;font-size:14px;line-height:20px;color:#555">表示数:</div>
<div class="abs" style="left:1260px;top:957px;font-size:14px;line-height:20px;color:#555">10</div>
<svg class="ic" style="left:1290px;top:955px;width:24px;height:24px;" viewBox="0 0 24 24"><path fill="#555" d="M7,10L12,15L17,10H7Z"/></svg>
<div class="abs" style="left:1347px;top:957px;font-size:14px;line-height:20px;color:#555;letter-spacing:.2px">1-10 of 11</div>
<svg class="ic" style="left:1444px;top:955px;width:24px;height:24px;" viewBox="0 0 24 24"><path fill="#bdbdbd" d="M18.41,16.59L13.82,12L18.41,7.41L17,6L11,12L17,18L18.41,16.59M6,6H8V18H6V6Z"/></svg>
<svg class="ic" style="left:1496px;top:955px;width:24px;height:24px;" viewBox="0 0 24 24"><path fill="#bdbdbd" d="M15.41,16.58L10.83,12L15.41,7.41L14,6L8,12L14,18L15.41,16.58Z"/></svg>
<svg class="ic" style="left:1547px;top:955px;width:24px;height:24px;" viewBox="0 0 24 24"><path fill="#6a6a6a" d="M8.59,16.58L13.17,12L8.59,7.41L10,6L16,12L10,18L8.59,16.58Z"/></svg>
<svg class="ic" style="left:1599px;top:955px;width:24px;height:24px;" viewBox="0 0 24 24"><path fill="#6a6a6a" d="M5.59,7.41L10.18,12L5.59,16.59L7,18L13,12L7,6L5.59,7.41M16,6H18V18H16V6Z"/></svg>
</div></body></html>
